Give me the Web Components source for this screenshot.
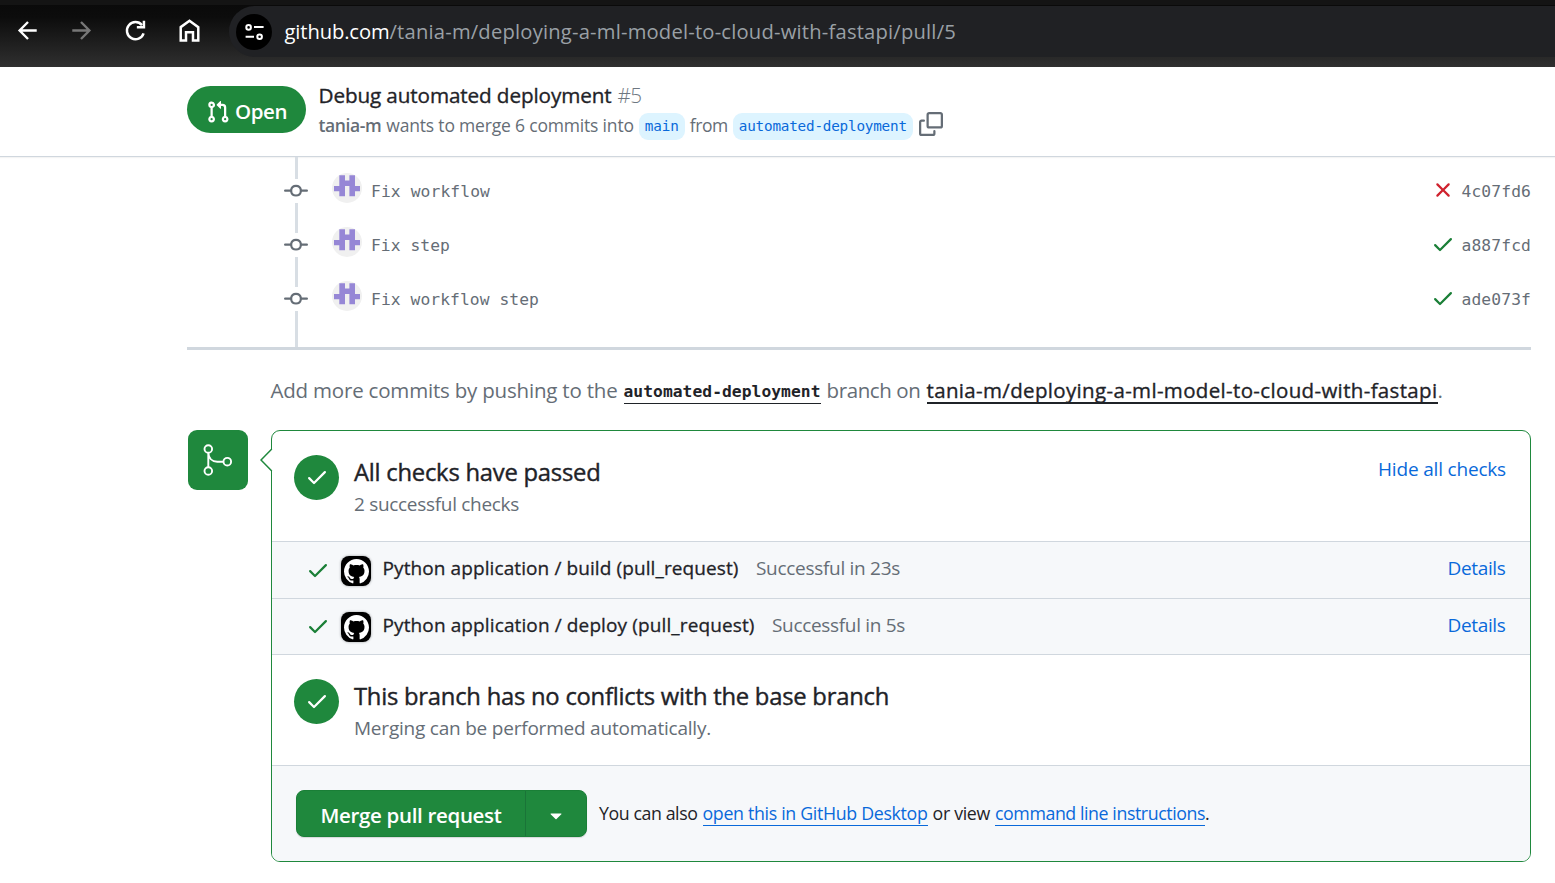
<!DOCTYPE html>
<html lang="en">
<head>
<meta charset="utf-8">
<title>Debug automated deployment · Pull Request #5</title>
<style>
  html, body { margin: 0; height: 100%; background: #fff; overflow: hidden; }
  body { font-family: "Open Sans", "Noto Sans", sans-serif; color: #1f2328; }
</style>
</head>
<body>
<pull-page></pull-page>
<script>
const ICONS = {
  check: '<path d="M13.78 4.22a.75.75 0 0 1 0 1.06l-7.25 7.25a.75.75 0 0 1-1.06 0L2.22 9.28a.751.751 0 0 1 .018-1.042.751.751 0 0 1 1.042-.018L6 10.94l6.72-6.72a.75.75 0 0 1 1.06 0Z"/>',
  x: '<path d="M3.72 3.72a.75.75 0 0 1 1.06 0L8 6.94l3.22-3.22a.749.749 0 0 1 1.275.326.749.749 0 0 1-.215.734L9.06 8l3.22 3.22a.749.749 0 0 1-.326 1.275.749.749 0 0 1-.734-.215L8 9.06l-3.22 3.22a.751.751 0 0 1-1.042-.018.751.751 0 0 1-.018-1.042L6.94 8 3.72 4.78a.75.75 0 0 1 0-1.06Z"/>',
  pr: '<path d="M1.5 3.25a2.25 2.25 0 1 1 3 2.122v5.256a2.251 2.251 0 1 1-1.5 0V5.372A2.25 2.25 0 0 1 1.5 3.25Zm5.677-.177L9.573.677A.25.25 0 0 1 10 .854V2.5h1A2.5 2.5 0 0 1 13.5 5v5.628a2.251 2.251 0 1 1-1.5 0V5a1 1 0 0 0-1-1h-1v1.646a.25.25 0 0 1-.427.177L7.177 3.427a.25.25 0 0 1 0-.354ZM3.75 2.5a.75.75 0 1 0 0 1.5.75.75 0 0 0 0-1.5Zm0 9.5a.75.75 0 1 0 0 1.5.75.75 0 0 0 0-1.5Zm8.25.75a.75.75 0 1 0 1.5 0 .75.75 0 0 0-1.5 0Z"/>',
  commit: '<path d="M11.93 8.5a4.002 4.002 0 0 1-7.86 0H.75a.75.75 0 0 1 0-1.5h3.32a4.002 4.002 0 0 1 7.86 0h3.32a.75.75 0 0 1 0 1.5Zm-1.43-.75a2.5 2.5 0 1 0-5 0 2.5 2.5 0 0 0 5 0Z"/>',
  copy: '<path d="M0 6.75C0 5.784.784 5 1.75 5h1.5a.75.75 0 0 1 0 1.5h-1.5a.25.25 0 0 0-.25.25v7.5c0 .138.112.25.25.25h7.5a.25.25 0 0 0 .25-.25v-1.5a.75.75 0 0 1 1.5 0v1.5A1.75 1.75 0 0 1 9.25 16h-7.5A1.75 1.75 0 0 1 0 14.25Z"/><path d="M5 1.75C5 .784 5.784 0 6.75 0h7.5C15.216 0 16 .784 16 1.75v7.5A1.75 1.75 0 0 1 14.25 11h-7.5A1.75 1.75 0 0 1 5 9.25Zm1.75-.25a.25.25 0 0 0-.25.25v7.5c0 .138.112.25.25.25h7.5a.25.25 0 0 0 .25-.25v-7.5a.25.25 0 0 0-.25-.25Z"/>',
  mark: '<path d="M8 0c4.42 0 8 3.58 8 8a8.013 8.013 0 0 1-5.45 7.59c-.4.08-.55-.17-.55-.38 0-.27.01-1.13.01-2.2 0-.75-.25-1.23-.54-1.48 1.78-.2 3.65-.88 3.65-3.95 0-.88-.31-1.59-.82-2.15.08-.2.36-1.02-.08-2.12 0 0-.67-.22-2.2.82-.64-.18-1.32-.27-2-.27-.68 0-1.36.09-2 .27-1.53-1.03-2.2-.82-2.2-.82-.44 1.1-.16 1.92-.08 2.12-.51.56-.82 1.28-.82 2.15 0 3.06 1.86 3.75 3.64 3.95-.23.2-.44.55-.51 1.07-.46.21-1.61.55-2.33-.66-.15-.24-.6-.83-1.23-.82-.67.01-.27.38.01.53.34.19.73.9.82 1.13.16.45.68 1.31 2.69.94 0 .67.01 1.3.01 1.49 0 .21-.15.45-.55.38A7.995 7.995 0 0 1 0 8c0-4.42 3.58-8 8-8Z"/>',
  caret: '<path d="m4.427 7.427 3.396 3.396a.25.25 0 0 0 .354 0l3.396-3.396A.25.25 0 0 0 11.396 7H4.604a.25.25 0 0 0-.177.427Z"/>',
  back: '<path transform="scale(.6667)" d="M20.200 10.900H7.500l5.700-5.700L11.700 3.700 3.500 12l8.200 8.300 1.500-1.500-5.700-5.700H20.200z"/>',
  forward: '<path transform="translate(16 0) scale(-.6667 .6667)" d="M20.200 10.900H7.500l5.700-5.700L11.700 3.700 3.500 12l8.200 8.300 1.500-1.500-5.700-5.700H20.200z"/>',
  reload: '<g transform="scale(.6667)" fill="none" stroke="currentColor" stroke-width="2.200"><path d="M19.200 14.500A7.600 7.600 0 1 1 17.800 7.200"/><path d="M19.500 3.300v5.900h-6.300"/></g>',
  home: '<path transform="scale(.6667)" fill="none" stroke="currentColor" stroke-width="2.200" d="M4.200 9 12 3.400 19.800 9V20.800H15.100V13.600H8.900V20.800H4.200Z"/>',
  tune: '<g transform="scale(.6667)" fill="none" stroke="currentColor" stroke-width="2"><circle cx="6.600" cy="7.400" r="2.300"/><path d="M12 7.100h9.600M3.600 16.700h8.400"/><circle cx="17.600" cy="16.800" r="2.300"/></g>',
  merge: '<g transform="scale(.5)" fill="none" stroke="currentColor" stroke-width="1.900"><circle cx="6.300" cy="5" r="3.800"/><circle cx="6.300" cy="27" r="3.800"/><circle cx="25.300" cy="17.700" r="3.800"/><path d="M6.300 8.800v14.400M6.300 8.800c.3 5 3.400 8.900 9 8.900h6.200"/></g>'
};

function define(name, css, html, setup) {
  const tpl = document.createElement('template');
  tpl.innerHTML = `<style>:host{box-sizing:border-box}*{box-sizing:border-box}${css}</style>${html}`;
  customElements.define(name, class extends HTMLElement {
    constructor() {
      super();
      this.attachShadow({ mode: 'open' }).append(tpl.content.cloneNode(true));
    }
    connectedCallback() { if (setup) setup(this, this.shadowRoot); }
  });
}

define('oct-icon',
  ':host{display:block;flex:none;line-height:0} svg{display:block;fill:currentColor;overflow:visible}',
  '<svg viewBox="0 0 16 16"></svg>',
  (el, root) => {
    const size = el.getAttribute('size') || 24;
    const svg = root.querySelector('svg');
    svg.setAttribute('width', size);
    svg.setAttribute('height', size);
    svg.innerHTML = ICONS[el.getAttribute('name')];
  });

define('browser-bar',
  `:host{display:flex;align-items:flex-start;height:67px;background:linear-gradient(#0a0a0a,#0c0c0c 12px,#313131 64px);color:#fff;overflow:hidden;border-top:5px solid #141414;position:relative}
   :host::before{content:"";position:absolute;left:0;right:0;top:-3px;height:2px;background:#000}
   nav{display:flex;gap:27px;padding:12px 0 0 14px;flex:none}
   .off{color:#777}
   .url{flex:1;display:flex;align-items:center;gap:13px;margin:1px -60px 0 25.500px;height:51px;border-radius:26px;background:#202124;padding-left:7px}
   .tune{width:36px;height:36px;border-radius:50%;background:#000;display:grid;place-items:center}
   .addr{display:flex;margin-top:-2px;font-size:20.200px;line-height:30px;color:#9aa0a6}
   .host{color:#fff}`,
  `<nav><oct-icon name="back" size="27"></oct-icon><oct-icon class="off" name="forward" size="27"></oct-icon><oct-icon name="reload" size="27"></oct-icon><oct-icon name="home" size="27"></oct-icon></nav>
   <div class="url"><span class="tune"><oct-icon name="tune" size="24"></oct-icon></span>
   <div class="addr"><fit-text class="host" w="105">github.com</fit-text><fit-text w="566.500">/tania-m/deploying-a-ml-model-to-cloud-with-fastapi/pull/5</fit-text></div></div>`);

define('state-pill',
  `:host{display:flex;align-items:center;width:119px;height:47px;border-radius:24px;background:#1f883d;color:#fff;padding:4px 0 0 19px;gap:5px;font-size:20.500px;font-weight:600;line-height:30px}
   fit-text{margin-top:-1px}`,
  '<oct-icon name="pr"></oct-icon><fit-text w="52"><slot></slot></fit-text>');

define('branch-tag',
  `:host{display:block;height:27px;border-radius:9px;background:#ddf4ff;color:#0969da;padding:0 6px;font:14.300px/27px "DejaVu Sans Mono","Liberation Mono",monospace}`,
  '<slot></slot>');

define('pr-header',
  `:host{display:flex;height:90px;padding:19px 0 0 187px;border-bottom:1px solid #d0d7de;box-shadow:0 1px 1px rgba(31,35,40,.05)}
   .t{margin-left:12.500px}
   .title{display:flex;gap:6px;height:27px;margin-top:-4px;font-size:20.700px;line-height:27px}
   .title b{font-weight:500;-webkit-text-stroke:.35px}
   .num{color:#6e7781;font-weight:300}
   .sub{display:flex;gap:5px;height:27px;margin-top:4px;color:#656d76;font-size:17.500px;line-height:24px}
   .sub b{font-weight:600}
   .copy{margin:-1px 0 0 1.200px}`,
  `<state-pill>Open</state-pill>
   <div class="t"><div class="title"><fit-text w="293"><b>Debug automated deployment</b></fit-text><fit-text class="num" w="24">#5</fit-text></div>
   <div class="sub"><fit-text w="62.800"><b>tania-m</b></fit-text><fit-text w="247.500">wants to merge 6 commits into</fit-text><branch-tag><fit-text w="34">main</fit-text></branch-tag><fit-text w="38">from</fit-text><branch-tag><fit-text w="168">automated-deployment</fit-text></branch-tag><oct-icon class="copy" name="copy"></oct-icon></div></div>`);

define('user-avatar',
  ':host{display:block;width:30px;height:30px} svg{display:block}',
  `<svg width="30" height="30"><circle cx="15" cy="15" r="15" fill="#f0f0f0"/><path fill="#9687d6" d="M7.300 2.300H13V7.600H17.400V2.300H23V13H28V18.300H23V23.300H17.400V13H13V23.300H7.300V18.300H2V13H7.300Z"/></svg>`);

define('commit-row',
  `:host{display:flex;align-items:flex-start;height:54px;color:#656d76;font:16.300px/26px "DejaVu Sans Mono","Liberation Mono",monospace}
   .rail{width:24px;height:54px;margin-left:97px;background:linear-gradient(#d8dee4,#d8dee4) 11px 24px/3px 30px no-repeat}
   user-avatar{margin:-6px 9px 0 24px}
   .msg{flex:1}
   .state{margin:-1px 7px 0 0;color:#1a7f37}
   :host([state=x]) .state{color:#cf222e}`,
  `<div class="rail"><oct-icon name="commit"></oct-icon></div><user-avatar></user-avatar><span class="msg"><slot></slot></span><oct-icon class="state" name="check"></oct-icon><fit-text w="69.500"><slot name="sha"></slot></fit-text>`,
  (el, root) => {
    if (el.getAttribute('state') !== 'x') return;
    const icon = root.querySelector('.state');
    icon.setAttribute('name', 'x');
    icon.shadowRoot.querySelector('svg').innerHTML = ICONS.x;
  });

define('commit-list',
  `:host{display:block;margin:0 24px 0 187px;height:193px;border-bottom:3px solid #d0d7de;overflow:hidden}
   .lead{height:22px;background:linear-gradient(#d8dee4,#d8dee4) 108px 0/3px 100% no-repeat}
   .tail{height:6px;background:linear-gradient(#d8dee4,#d8dee4) 108px 0/3px 100% no-repeat}`,
  '<div class="lead"></div><slot></slot><div class="tail"></div>');

define('push-hint',
  `:host{display:flex;margin-left:270.500px;height:80px;padding-top:25px;font-size:20.500px;line-height:31px;color:#656d76}
   .u{height:28.500px;border-bottom:2px solid #1f2328;color:#1f2328}
   .m{font-family:"DejaVu Sans Mono","Liberation Mono",monospace;font-size:16.300px;font-weight:700;border-bottom-width:1px;line-height:34px;margin:0 6px}
   .r{margin-left:6px;-webkit-text-stroke:.35px}`,
  `<fit-text w="347">Add more commits by pushing to the</fit-text><fit-text class="u m" w="197">automated-deployment</fit-text><fit-text w="94">branch on</fit-text><fit-text class="u r" w="511">tania-m/deploying-a-ml-model-to-cloud-with-fastapi</fit-text><span>.</span>`);

define('merge-badge',
  ':host{display:grid;width:60px;height:60px;border-radius:9px;background:#1f883d;color:#fff;padding:14px 0 0 14px;flex:none}',
  '<oct-icon name="merge" size="32"></oct-icon>');

define('status-section',
  `:host{display:flex;height:111px;border-bottom:1px solid #d0d7de;padding:24px 24px 0 22px}
   .dot{width:45px;height:45px;border-radius:50%;background:#1f883d;color:#fff;display:grid;place-items:center;flex:none;padding-bottom:1px}
   .b{flex:1;margin-left:15px}`,
  `<span class="dot"><oct-icon name="check"></oct-icon></span><div class="b"><slot name="title"></slot><slot></slot></div><slot name="action"></slot>`);

define('check-row',
  `:host{display:flex;height:57px;border-bottom:1px solid #d0d7de;background:#f6f8fa;padding:12px 24.500px 0 34px;font-size:19px;line-height:28px}
   .ok{color:#1a7f37;margin-top:4px}
   .app{width:30px;height:30px;border-radius:8px;background:#000;color:#fff;display:grid;place-items:center;margin:2px 11.500px 0 11px;box-shadow:0 0 2px 1px rgba(31,35,40,.2)}
   :host(.last){height:56px}
   :host(.last) .ok{margin-top:3px}
   :host(.last) .app{margin-top:1px}
   .s{flex:1;margin-left:17.500px;color:#656d76}
   .d{color:#0969da}`,
  `<oct-icon class="ok" name="check"></oct-icon><span class="app"><oct-icon name="mark" size="25"></oct-icon></span><slot></slot><span class="s"><slot name="status"></slot></span><fit-text class="d" w="58">Details</fit-text>`);

define('merge-button',
  `:host{display:flex;width:291px;height:47px;border-radius:8px;border:1px solid #1a7f37;background:#1f883d;color:#fff;box-shadow:0 1px 1px rgba(31,35,40,.15);font-size:20.500px;font-weight:600;line-height:47px}
   .main{width:229px;padding:1px 0 0 23.500px;border-right:1px solid #1a7438;height:45px}
   oct-icon{margin:12px 0 0 18px}`,
  '<div class="main"><fit-text w="181"><slot></slot></fit-text></div><oct-icon name="caret"></oct-icon>');

define('merge-footer',
  `:host{display:flex;height:95px;background:#f6f8fa;padding:24px 0 0 24px;font-size:17.800px;line-height:26px;border-radius:0 0 8px 8px}
   .txt{display:flex;margin:10px 0 0 12px;gap:5px}
   .a{color:#0969da;border-bottom:1px solid #0969da;height:26px}
   .end{margin-left:-5px}`,
  `<merge-button>Merge pull request</merge-button><div class="txt"><fit-text w="98.500">You can also</fit-text><fit-text class="a" w="225">open this in GitHub Desktop</fit-text><fit-text w="57.500">or view</fit-text><fit-text class="a" w="210">command line instructions</fit-text><span class="end">.</span></div>`);

define('merge-box',
  `:host{display:block;position:relative;width:1260px;height:432px;border:1px solid #1f883d;border-radius:9px;background:#fff}
   .arrow{position:absolute;left:-12px;top:16px}`,
  `<svg class="arrow" width="13" height="26"><path d="M12.500 1.500 1 13 12.500 24.500Z" fill="#fff"/><path d="M11.800 2 1 13 11.800 24" fill="none" stroke="#1f883d" stroke-width="1.500"/></svg><slot></slot>`);

define('pull-page',
  `:host{display:block;width:1555px;height:883px;overflow:hidden}
   .merge{display:flex;gap:23px;padding-left:188px}
   .h{font-size:23.800px;-webkit-text-stroke:.4px;line-height:34px;display:block}
   .s{font-size:19px;line-height:30px;color:#656d76;display:block}
   .a{font-size:19px;line-height:28px;color:#0969da}
   .m{-webkit-text-stroke:.3px}`,
  `<browser-bar></browser-bar>
   <pr-header></pr-header>
   <commit-list>
     <commit-row state="x"><fit-text w="119">Fix workflow</fit-text><span slot="sha">4c07fd6</span></commit-row>
     <commit-row><fit-text w="79">Fix step</fit-text><span slot="sha">a887fcd</span></commit-row>
     <commit-row><fit-text w="168">Fix workflow step</fit-text><span slot="sha">ade073f</span></commit-row>
   </commit-list>
   <push-hint></push-hint>
   <div class="merge"><merge-badge></merge-badge>
   <merge-box>
     <status-section><fit-text slot="title" class="h" w="246.500">All checks have passed</fit-text><fit-text class="s" w="165">2 successful checks</fit-text><fit-text slot="action" class="a" w="128">Hide all checks</fit-text></status-section>
     <check-row><fit-text class="m" w="356">Python application / build (pull_request)</fit-text><fit-text slot="status" w="144">Successful in 23s</fit-text></check-row>
     <check-row class="last"><fit-text class="m" w="372">Python application / deploy (pull_request)</fit-text><fit-text slot="status" w="133">Successful in 5s</fit-text></check-row>
     <status-section><fit-text slot="title" class="h" w="535">This branch has no conflicts with the base branch</fit-text><fit-text class="s" w="357">Merging can be performed automatically.</fit-text></status-section>
     <merge-footer></merge-footer>
   </merge-box></div>`);

/* Tracks its text so that the run takes the width given in "w". Registered last, once every host is laid out. */
define('fit-text',
  ':host{display:block;white-space:nowrap;flex:none} span{display:inline-block}',
  '<span><slot></slot></span>',
  (el, root) => {
    const span = root.querySelector('span');
    const w = parseFloat(el.getAttribute('w'));
    const text = el.querySelector('slot') ? el.querySelector('slot').assignedNodes({ flatten: true }).map(n => n.textContent).join('') : el.textContent;
    const n = text.trim().length;
    span.style.letterSpacing = (w - span.getBoundingClientRect().width) / n + 'px';
    el.style.width = w + 'px';
  });
</script>
</body>
</html>
